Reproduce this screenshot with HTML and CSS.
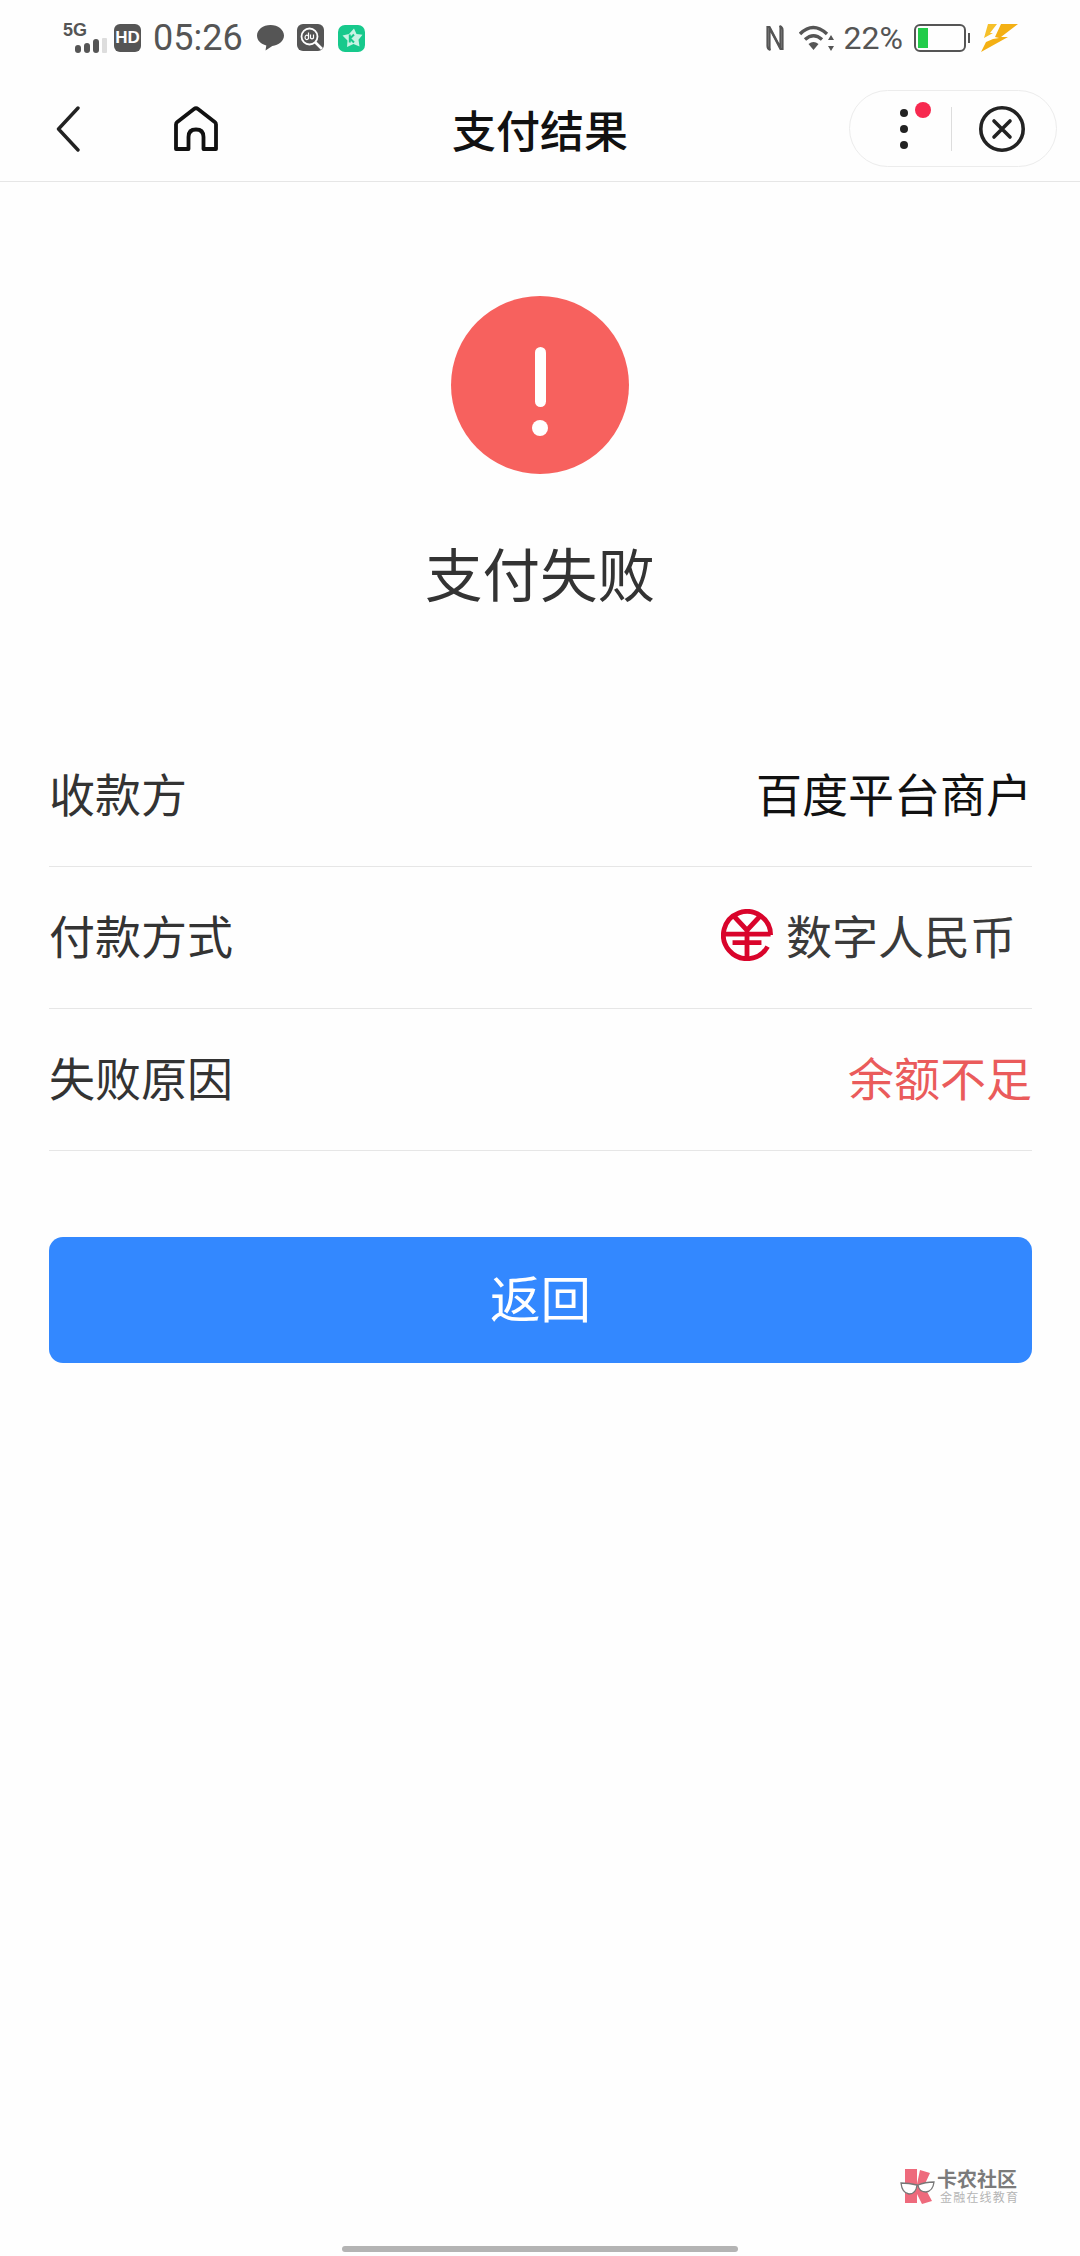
FILE: index.html
```html
<!DOCTYPE html>
<html lang="zh-CN">
<head>
    <meta charset="UTF-8">
    <meta name="viewport" content="width=device-width, initial-scale=1.0">
    <title>支付结果</title>
    <link rel="stylesheet" href="styles.css">
</head>
<body>
    <div class="page">
        <div class="status-bar">
            <div class="status-left">
                <div class="signal">
                    <span class="signal-label">5G</span>
                    <svg class="signal-bars" width="32" height="15" viewBox="0 0 32 15">
                        <rect x="0" y="7" width="6" height="8" rx="3" fill="#555"/>
                        <rect x="9" y="5" width="6" height="10" rx="3" fill="#555"/>
                        <rect x="18" y="1" width="6" height="14" rx="3" fill="#555"/>
                        <rect x="27" y="0" width="5" height="15" rx="1" fill="#ddd"/>
                    </svg>
                </div>
                <span class="hd-badge">HD</span>
                <span class="clock">05:26</span>
                <svg class="notice-bubble" width="27" height="26" viewBox="0 0 27 26">
                    <path d="M13.500 0C6 0 0 4.700 0 10.500c0 4.800 3.800 8.700 9.300 9.900L8.500 25.500l6.800-4.600C21.800 20.300 27 16 27 10.500 27 4.700 21 0 13.500 0z" fill="#555"/>
                </svg>
                <svg class="notice-du" width="27" height="28" viewBox="0 0 27 28">
                    <rect width="27" height="27" rx="6" fill="#555"/>
                    <circle cx="12.500" cy="12.500" r="8" fill="#555" stroke="#fff" stroke-width="1.800"/>
                    <path d="M18 18l7 7" stroke="#fff" stroke-width="2.600"/>
                    <path d="M11.500 8.500v6.500M11.500 12.500a1.800 2.200 0 1 0 0 1.800M13.500 10.500v3.500q1.500 1.500 3 0V10.500" fill="none" stroke="#fff" stroke-width="1.200"/>
                </svg>
                <svg class="notice-k" width="27" height="27" viewBox="0 0 27 27">
                    <rect width="27" height="27" rx="7" fill="#17c98c"/>
                    <path d="M16 3.500l2.500 5.500 6 .8-4 5 1 6.700-6-2.500-6.500 3 .5-6.500L4.500 10.500l6.500-1.500z" fill="#c9f3e4"/>
                    <path d="M11.800 9.500v8M16 9.500l-4 4 4 4" fill="none" stroke="#17c98c" stroke-width="2"/>
                </svg>
            </div>
            <div class="status-right">
                <svg class="nfc" width="18" height="28" viewBox="0 0 18 28">
                    <path d="M4.500 26Q1.500 25 1.500 22V3h2L14.500 24V2" fill="none" stroke="#555" stroke-width="2.200"/>
                    <path d="M13.500 2q3 1 3 4v19h-2L3.500 4v22" fill="none" stroke="#555" stroke-width="2.200"/>
                </svg>
                <svg class="wifi" width="35" height="26" viewBox="0 0 35 26">
                    <path d="M1 9Q14-4 28 9" fill="none" stroke="#555" stroke-width="3.400"/>
                    <path d="M6 14.500q8.500-7.500 17 0" fill="none" stroke="#555" stroke-width="3.400"/>
                    <path d="M9.500 19q5-4 10 0L14.500 25z" fill="#555"/>
                    <path d="M32 10l3 5h-6zM32 26l-3-5h6z" fill="#555"/>
                </svg>
                <span class="battery-text">22%</span>
                <div class="battery">
                    <div class="battery-body">
                        <div class="battery-level"></div>
                    </div>
                    <div class="battery-nub"></div>
                </div>
                <svg class="bolt" width="37" height="28" viewBox="0 0 37 28">
                    <path d="M7 0h9L9 9l3 0-9 5z" fill="#f6c02a"/>
                    <path d="M20 0h17L20 13l7 0L0 28l5-10 7-3 6-1-4-1z" fill="#f4b014"/>
                </svg>
            </div>
        </div>

        <div class="nav-bar">
            <div class="nav-left">
                <svg width="24" height="46" viewBox="0 0 24 46">
                    <path d="M22 2L2.500 23 22 44" fill="none" stroke="#222" stroke-width="3.400" stroke-linecap="round" stroke-linejoin="round"/>
                </svg>
                <svg width="46" height="46" viewBox="0 0 46 46">
                    <path d="M3 43V18.500q0-1.500 1.300-2.600L21 3q2-1.500 4 0l16.700 12.900q1.300 1.100 1.300 2.600V43H30.500V31q0-7.500-7.500-7.500T15.500 31v12z" fill="none" stroke="#111" stroke-width="3.800" stroke-linejoin="round"/>
                </svg>
            </div>
            <div class="nav-title">支付结果</div>
            <div class="nav-right">
                <div class="capsule">
                    <div class="more">
                        <span class="more-dot"></span>
                        <span class="more-dot"></span>
                        <span class="more-dot"></span>
                        <span class="red-dot"></span>
                    </div>
                    <div class="capsule-line"></div>
                    <svg width="46" height="46" viewBox="0 0 46 46">
                        <circle cx="23" cy="23" r="21.200" fill="none" stroke="#222" stroke-width="3.600"/>
                        <path d="M15 15l16 16M31 15L15 31" stroke="#222" stroke-width="3.600" stroke-linecap="round"/>
                    </svg>
                </div>
            </div>
        </div>

        <div class="result-head">
            <div class="fail-icon">
                <span class="fail-bar"></span>
                <span class="fail-point"></span>
            </div>
            <h1 class="fail-title">支付失败</h1>
        </div>

        <div class="info-list">
            <div class="info-row">
                <span class="info-label">收款方</span>
                <span class="info-value">百度平台商户</span>
            </div>
            <div class="info-row">
                <span class="info-label">付款方式</span>
                <span class="info-value pay-way">
                    <svg class="pay-logo" width="52" height="52" viewBox="0 0 54 54">
                        <path d="M51.500 27A24.500 24.500 0 1 0 48.400 39" fill="none" stroke="#d9042b" stroke-width="5"/>
                        <path d="M13 7l14 15L41 7M27 22v30M2.500 26H51.500M12 35H42" fill="none" stroke="#d9042b" stroke-width="5"/>
                    </svg>
                    <span class="pay-name">数字人民币</span>
                </span>
            </div>
            <div class="info-row">
                <span class="info-label">失败原因</span>
                <span class="info-value reason">余额不足</span>
            </div>
        </div>

        <button class="back-btn" type="button">返回</button>

        <div class="watermark">
            <svg width="36" height="36" viewBox="0 0 36 36">
                <path d="M5 1h12v15L20 2l10 3-6 13 8 15-10 3-5-10v9H5z" fill="#ee6a7c"/>
                <path d="M1 15q8 0 16 2-1 9-8 9Q2 25 1 15zM18 17q7-3 16-3-1 9-8 10-7 0-8-7z" fill="#fff" stroke="#777" stroke-width="1.300"/>
            </svg>
            <div class="watermark-text">
                <span class="watermark-name">卡农社区</span>
                <span class="watermark-sub">金融在线教育</span>
            </div>
        </div>
        <div class="home-bar"></div>
    </div>
</body>
</html>
```

FILE: styles.css
```css
* {
    box-sizing: border-box;
}

html, body {
    margin: 0;
    padding: 0;
}

body {
    background: #fefefe;
    font-family: "Noto Sans CJK SC", "Noto Sans", sans-serif;
}

.page {
    position: relative;
    width: 1080px;
    height: 2256px;
    overflow: hidden;
}

/* status bar */
.status-bar {
    display: flex;
    justify-content: space-between;
    align-items: center;
    height: 70px;
    padding: 6px 62px 0 63px;
    color: #555;
}

.status-left, .status-right {
    display: flex;
    align-items: center;
}

.signal {
    position: relative;
    width: 44px;
    height: 29px;
}

.signal-label {
    position: absolute;
    left: 0;
    top: -4px;
    font-family: "Liberation Sans", sans-serif;
    font-size: 18px;
    font-weight: bold;
}

.signal-bars {
    position: absolute;
    left: 12px;
    bottom: 0;
}

.hd-badge {
    width: 27px;
    height: 28px;
    margin-left: 7px;
    background: #555;
    border-radius: 6px;
    color: #fff;
    font-family: "Liberation Sans", sans-serif;
    font-size: 17px;
    font-weight: bold;
    line-height: 28px;
    text-align: center;
}

.clock {
    margin-left: 12px;
    font-family: Roboto, sans-serif;
    font-size: 36px;
    line-height: 40px;
}

.notice-bubble {
    margin-left: 14px;
}

.notice-du {
    margin-left: 13px;
}

.notice-k {
    margin-left: 14px;
}

.wifi {
    margin-left: 15px;
}

.battery-text {
    margin-left: 10px;
    font-family: Roboto, sans-serif;
    font-size: 32px;
    line-height: 40px;
}

.battery {
    display: flex;
    align-items: center;
    gap: 2px;
    margin-left: 11px;
}

.battery-body {
    width: 52px;
    height: 28px;
    padding: 2px;
    border: 2px solid #555;
    border-radius: 6px;
}

.battery-level {
    width: 10px;
    height: 20px;
    background: #22cc4a;
}

.battery-nub {
    width: 2px;
    height: 10px;
    background: #555;
}

.bolt {
    margin-left: 11px;
}

/* nav */
.nav-bar {
    display: grid;
    grid-template-columns: 1fr auto 1fr;
    align-items: center;
    height: 112px;
    padding-top: 6px;
    border-bottom: 1px solid #e6e6e6;
}

.nav-left {
    display: flex;
    align-items: center;
    gap: 93px;
    padding-left: 56px;
}

.nav-title {
    color: #111;
    font-size: 44px;
    font-weight: 500;
    line-height: 60px;
}

.nav-right {
    display: flex;
    justify-content: flex-end;
    padding-right: 23px;
}

.capsule {
    display: flex;
    align-items: center;
    width: 208px;
    height: 77px;
    padding-left: 50px;
    border: 1px solid #ececec;
    border-radius: 39px;
}

.more {
    position: relative;
    display: flex;
    flex-direction: column;
    gap: 8px;
    width: 8px;
}

.more-dot {
    width: 8px;
    height: 8px;
    background: #222;
    border-radius: 50%;
}

.red-dot {
    position: absolute;
    left: 15px;
    top: -7px;
    width: 16px;
    height: 16px;
    background: #f7294f;
    border-radius: 50%;
}

.capsule-line {
    width: 1px;
    height: 44px;
    margin: 0 27px 0 43px;
    background: #ddd;
}

/* result */
.result-head {
    display: flex;
    flex-direction: column;
    align-items: center;
    padding-top: 114px;
}

.fail-icon {
    display: flex;
    flex-direction: column;
    align-items: center;
    width: 178px;
    height: 178px;
    padding-top: 51px;
    background: #f7615e;
    border-radius: 50%;
}

.fail-bar {
    width: 11px;
    height: 60px;
    background: #fff;
    border-radius: 6px;
}

.fail-point {
    width: 16px;
    height: 16px;
    margin-top: 13px;
    background: #fff;
    border-radius: 50%;
}

.fail-title {
    margin: 63px 0 0;
    color: #333;
    font-size: 57.500px;
    font-weight: 400;
    line-height: 70px;
}

.info-list {
    margin: 118px 48px 0 49px;
}

.info-row {
    display: flex;
    justify-content: space-between;
    align-items: center;
    height: 142px;
    padding-bottom: 8px;
    border-bottom: 1px solid #e6e6e6;
}

.info-label {
    color: #333;
    font-size: 46px;
}

.info-value {
    color: #111;
    font-size: 46px;
}

.pay-way {
    display: flex;
    align-items: center;
    gap: 13px;
    padding-right: 16px;
}

.pay-logo {
    margin-top: 3px;
}

.pay-name {
    color: #3a3a3a;
}

.reason {
    color: #ea5b5b;
}

.back-btn {
    display: block;
    width: 983px;
    height: 126px;
    margin: 86px 0 0 49px;
    padding: 0 0 8px;
    background: #3388ff;
    border: 0;
    border-radius: 14px;
    color: #fff;
    font-family: inherit;
    font-size: 50.500px;
}

/* overlays pinned to the screen bottom */
.watermark {
    position: absolute;
    left: 900px;
    top: 2168px;
    display: flex;
    align-items: center;
    gap: 1px;
}

.watermark-text {
    display: flex;
    flex-direction: column;
}

.watermark-name {
    color: #7b7b7b;
    font-size: 20px;
    font-weight: 700;
    line-height: 21px;
}

.watermark-sub {
    padding-left: 3px;
    color: #b5b5b5;
    font-size: 12px;
    letter-spacing: 1.200px;
    line-height: 15px;
}

.home-bar {
    position: absolute;
    left: 342px;
    top: 2246px;
    width: 396px;
    height: 6px;
    background: #b4b4b4;
    border-radius: 3px;
}
```
